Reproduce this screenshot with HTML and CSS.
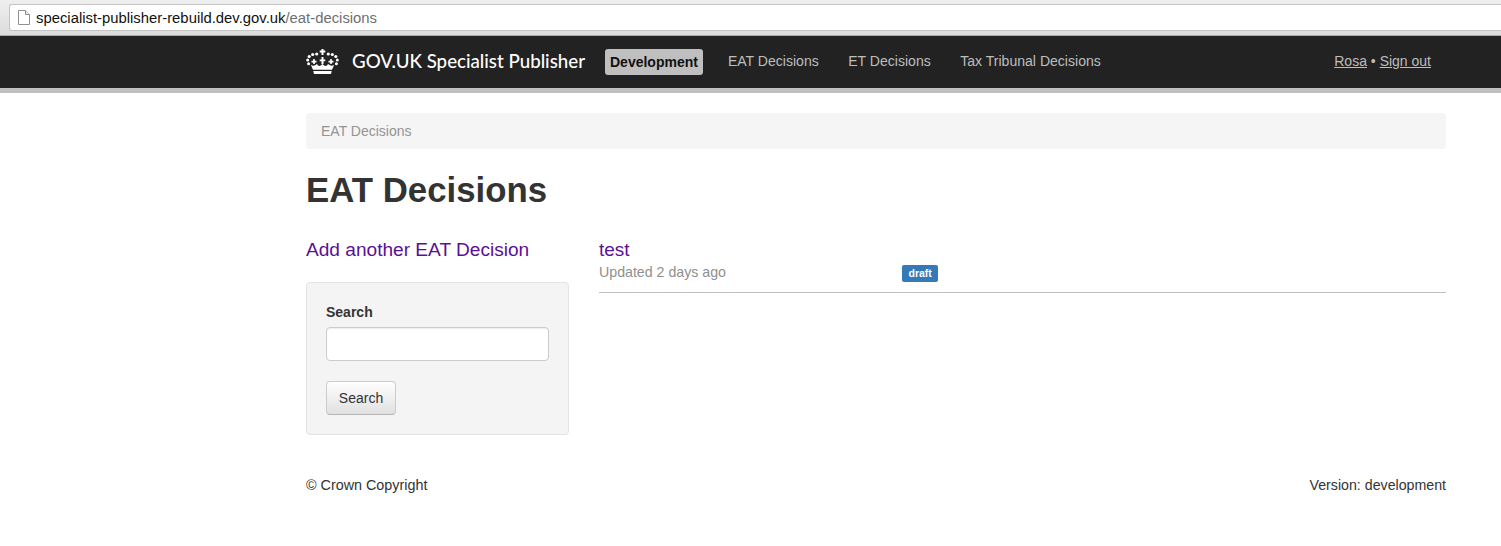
FILE: index.html
```html
<!DOCTYPE html>
<html lang="en">
<head>
<meta charset="utf-8">
<title>EAT Decisions</title>
<link rel="stylesheet" href="styles.css">
</head>
<body>
<div class="browser-bar">
  <div class="url-box">
    <svg class="page-icon" width="12" height="15" viewBox="0 0 12 15"><path d="M.5.5h7l4 4v10H.5z" fill="#fff" stroke="#8f8f8f"/><path d="M7.5.5v4h4" fill="#eee" stroke="#8f8f8f"/></svg>
    <span class="url-host">specialist-publisher-rebuild.dev.gov.uk</span><span class="url-path">/eat-decisions</span>
  </div>
</div>
<header class="navbar">
  <div class="container nav-inner">
    <a class="brand" href="#">
      <svg class="crown" width="33" height="25" viewBox="0 0 33 25" fill="#fff">
        <path d="M15.500 0h2v1.500h1.800v2h-1.800V6h-2V3.500h-1.800v-2h1.800z"/>
        <circle cx="1.700" cy="11" r="1.500"/><circle cx="31.300" cy="11" r="1.500"/>
        <circle cx="3.200" cy="7.500" r="1.600"/><circle cx="29.800" cy="7.500" r="1.600"/>
        <circle cx="6.700" cy="5.500" r="1.600"/><circle cx="26.300" cy="5.500" r="1.600"/>
        <circle cx="10.700" cy="5" r="1.600"/><circle cx="22.300" cy="5" r="1.600"/>
        <circle cx="2.600" cy="14.700" r="1.500"/><circle cx="30.400" cy="14.700" r="1.500"/>
        <path d="M15.500 8h2v2.500h1.800v1.800h-1.800V15h-2v-2.700h-1.800v-1.800h1.800z"/>
        <path d="M7.200 10h1.600v1.800h1.700v1.700H8.800V15H7.200v-1.500H5.500v-1.700h1.700zM24.200 10h1.600v1.800h1.700v1.700h-1.700V15h-1.600v-1.500h-1.700v-1.700h1.700z"/>
        <path d="M4.800 15.800c1.500 1 2.900 1 4.200.5l2-1.300 1 1.500c1 .5 2 .5 2.800 0l1.700-1.500 1.700 1.500c.8.500 1.800.5 2.800 0l1-1.500 2 1.300c1.300.5 2.700.5 4.200-.5L26 20.800H7z"/>
        <path d="M7.300 22h18.400L25 25H8z"/>
      </svg>
      <span class="brand-text">GOV.UK Specialist Publisher</span>
    </a>
    <span class="env-label">Development</span>
    <nav class="nav-links">
      <a href="#">EAT Decisions</a>
      <a href="#">ET Decisions</a>
      <a href="#">Tax Tribunal Decisions</a>
    </nav>
    <div class="user-links"><a href="#">Rosa</a> • <a href="#">Sign out</a></div>
  </div>
</header>
<main class="container">
  <div class="breadcrumb">EAT Decisions</div>
  <h1>EAT Decisions</h1>
  <div class="columns">
    <aside class="sidebar">
      <a class="add-link" href="#">Add another EAT Decision</a>
      <form class="well">
        <label for="q">Search</label>
        <input id="q" type="text">
        <button type="button">Search</button>
      </form>
    </aside>
    <section class="results">
      <div class="result">
        <a class="result-title" href="#">test</a>
        <div class="result-meta">
          <span class="updated">Updated 2 days ago</span>
          <span class="badge">draft</span>
        </div>
      </div>
    </section>
  </div>
  <footer class="footer">
    <span class="copyright">© Crown Copyright</span>
    <span>Version: development</span>
  </footer>
</main>
</body>
</html>
```
FILE: styles.css
```css
* { box-sizing: border-box; }
html, body { margin: 0; padding: 0; }
body {
  font-family: "Liberation Sans", Arial, sans-serif;
  font-size: 14px;
  line-height: 20px;
  color: #333;
  background: #fff;
  overflow: hidden;
}
a { color: #4c2c92; }
.container { width: 1140px; margin-left: 306px; }

.browser-bar {
  height: 36px;
  padding: 4px 0 5px 9px;
  background: linear-gradient(#efefef, #dcdcdc);
  border-bottom: 1px solid #aaa;
}
.url-box {
  height: 27px;
  display: flex;
  align-items: center;
  padding-left: 8px;
  background: #fff;
  border: 1px solid #c4c4c4;
  border-right: 0;
  border-radius: 3px 0 0 3px;
  font-size: 14.85px;
}
.page-icon { margin-right: 6px; flex: none; }
.url-host { color: #111; }
.url-path { color: #6f6f6f; }

.navbar {
  height: 57px;
  background: #222;
  border-bottom: 5px solid #c0c0c0;
}
.nav-inner { display: flex; align-items: center; height: 52px; }
.brand { display: flex; align-items: center; color: #fff; text-decoration: none; }
.crown { margin-right: 13px; margin-top: -1px; }
.brand-text {
  font-family: Lato, sans-serif;
  font-size: 18.7px;
  font-weight: 500;
  width: 234px;
  white-space: nowrap;
  margin-bottom: 3px;
}
.env-label {
  margin-left: 19px;
  padding: 3px 5px;
  height: 26px;
  background: #bfbfbf;
  border-radius: 3px;
  color: #111;
  font-weight: bold;
  font-size: 14px;
}
.nav-links { display: flex; gap: 29.5px; margin-left: 25px; margin-bottom: 2px; font-size: 14.05px; }
.nav-links a { color: #bdbdbd; text-decoration: none; }
.user-links { margin-left: auto; margin-right: 15px; margin-bottom: 2px; color: #bdbdbd; }
.user-links a { color: #bdbdbd; }

.breadcrumb {
  margin-top: 20px;
  height: 36px;
  padding: 8px 15px;
  background: #f5f5f5;
  border-radius: 4px;
  color: #949494;
}
h1 {
  margin: 21px 0 0;
  font-size: 34.8px;
  line-height: 40px;
  font-weight: bold;
  color: #333;
}
.columns { display: flex; margin-top: 29px; }
.sidebar { width: 263px; margin-right: 30px; flex: none; }
.add-link { display: block; font-size: 19.1px; line-height: 21px; color: #5a1096; text-decoration: none; }
.well {
  margin-top: 22px;
  height: 153px;
  padding: 19px;
  background: #f4f4f4;
  border: 1px solid #e3e3e3;
  border-radius: 4px;
}
.well label { display: block; font-weight: bold; margin-bottom: 5px; }
.well input {
  display: block;
  width: 223px;
  height: 34px;
  border: 1px solid #ccc;
  border-radius: 4px;
  background: #fff;
  box-shadow: inset 0 1px 1px rgba(0,0,0,.075);
}
.well button {
  display: block;
  margin-top: 20px;
  width: 70px;
  height: 34px;
  font: 14px/20px "Liberation Sans", Arial, sans-serif;
  color: #333;
  border: 1px solid #ccc;
  border-bottom-color: #b5b5b5;
  border-radius: 4px;
  background: linear-gradient(#fff, #e0e0e0);
  text-align: center;
  padding: 0;
}
.results { flex: 1; }
.result { height: 54px; border-bottom: 1px solid #bfbfbf; }
.result-title { display: block; font-size: 19px; line-height: 21px; color: #5a1096; text-decoration: none; }
.result-meta { display: flex; align-items: center; height: 20px; margin-top: 2px; color: #8f8f8f; font-size: 14.2px; }
.updated { width: 303px; }
.badge {
  padding: 0 6.5px;
  height: 17px;
  margin-top: 2px;
  background: #337ab7;
  color: #fff;
  font-size: 10.5px;
  font-weight: bold;
  line-height: 17px;
  border-radius: 2px;
}
.footer { display: flex; justify-content: space-between; margin-top: 40px; color: #333; font-size: 14.2px; }
.copyright { font-size: 14.35px; }
```
